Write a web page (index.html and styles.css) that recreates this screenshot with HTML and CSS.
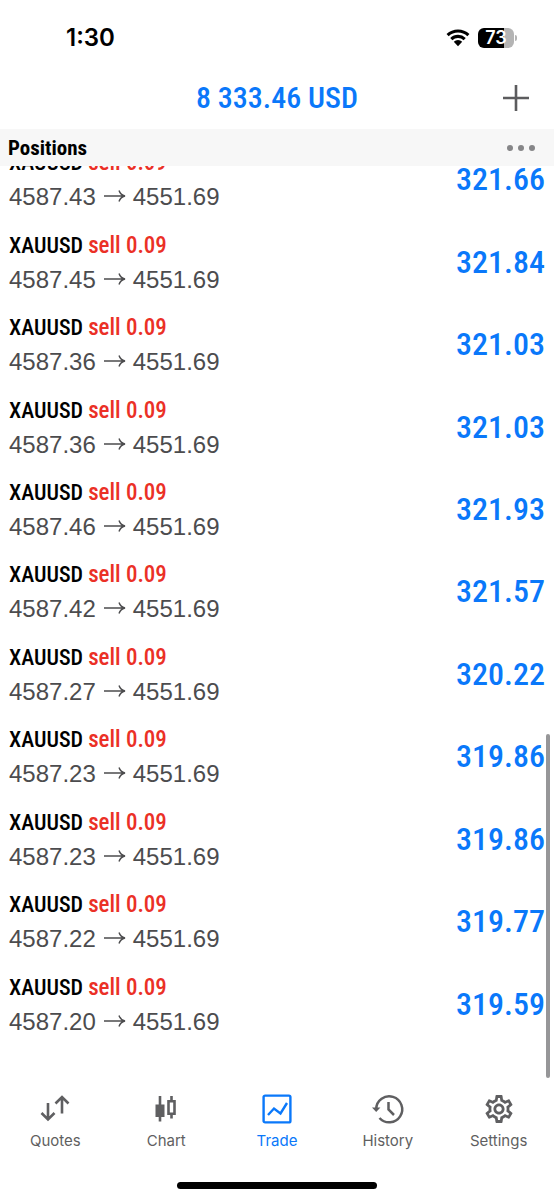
FILE: index.html
```html
<!DOCTYPE html>
<html lang="en">
<head>
<meta charset="utf-8">
<meta name="viewport" content="width=device-width, initial-scale=1">
<title>Trade</title>
<link rel="stylesheet" href="styles.css">
</head>
<body>
<svg width="0" height="0" class="symbols" aria-hidden="true">
  <symbol id="arrow" viewBox="0 0 22 14"><path d="M0 7h21M15 1.500c1 3 3 4.800 6 5.500-3 .7-5 2.500-6 5.500" fill="none" stroke="currentColor" stroke-width="1.400"/></symbol>
</svg>
<div class="app">
  <div class="status">
    <time class="clock">1:30</time>
    <div class="status-icons">
      <svg class="wifi" viewBox="0 0 24 18" aria-hidden="true">
        <path d="M1.600 6.200A15 15 0 0 1 22.400 6.200M5.300 10.100A9.700 9.700 0 0 1 18.700 10.100" fill="none" stroke="#000" stroke-width="3.100"/>
        <path d="M7.800 12.800a6 6 0 0 1 8.400 0L12 17.200z"/>
      </svg>
      <div class="battery"><span class="battery-level">73</span></div>
    </div>
  </div>

  <header class="topbar">
    <h1 class="balance">8 333.46 USD</h1>
    <button class="icon-button add" type="button" aria-label="New order">
      <svg viewBox="0 0 26 26" width="26" height="26"><path d="M13 0v26M0 13h26" stroke="#5c5c5e" stroke-width="2.600"/></svg>
    </button>
  </header>

  <div class="section-head">
    <h2 class="section-title">Positions</h2>
    <button class="icon-button" type="button" aria-label="More">
      <svg viewBox="0 0 30 8" width="30" height="8" fill="#868688"><circle cx="4" cy="4" r="3"/><circle cx="15" cy="4" r="3"/><circle cx="26" cy="4" r="3"/></svg>
    </button>
  </div>

  <main class="scroller">
    <ul class="positions">
      <li class="position"><div><p class="deal">XAUUSD <span class="side">sell 0.09</span></p><p class="prices">4587.43<svg class="arrow"><use href="#arrow"/></svg>4551.69</p></div><span class="profit">321.66</span></li>
      <li class="position"><div><p class="deal">XAUUSD <span class="side">sell 0.09</span></p><p class="prices">4587.45<svg class="arrow"><use href="#arrow"/></svg>4551.69</p></div><span class="profit">321.84</span></li>
      <li class="position"><div><p class="deal">XAUUSD <span class="side">sell 0.09</span></p><p class="prices">4587.36<svg class="arrow"><use href="#arrow"/></svg>4551.69</p></div><span class="profit">321.03</span></li>
      <li class="position"><div><p class="deal">XAUUSD <span class="side">sell 0.09</span></p><p class="prices">4587.36<svg class="arrow"><use href="#arrow"/></svg>4551.69</p></div><span class="profit">321.03</span></li>
      <li class="position"><div><p class="deal">XAUUSD <span class="side">sell 0.09</span></p><p class="prices">4587.46<svg class="arrow"><use href="#arrow"/></svg>4551.69</p></div><span class="profit">321.93</span></li>
      <li class="position"><div><p class="deal">XAUUSD <span class="side">sell 0.09</span></p><p class="prices">4587.42<svg class="arrow"><use href="#arrow"/></svg>4551.69</p></div><span class="profit">321.57</span></li>
      <li class="position"><div><p class="deal">XAUUSD <span class="side">sell 0.09</span></p><p class="prices">4587.27<svg class="arrow"><use href="#arrow"/></svg>4551.69</p></div><span class="profit">320.22</span></li>
      <li class="position"><div><p class="deal">XAUUSD <span class="side">sell 0.09</span></p><p class="prices">4587.23<svg class="arrow"><use href="#arrow"/></svg>4551.69</p></div><span class="profit">319.86</span></li>
      <li class="position"><div><p class="deal">XAUUSD <span class="side">sell 0.09</span></p><p class="prices">4587.23<svg class="arrow"><use href="#arrow"/></svg>4551.69</p></div><span class="profit">319.86</span></li>
      <li class="position"><div><p class="deal">XAUUSD <span class="side">sell 0.09</span></p><p class="prices">4587.22<svg class="arrow"><use href="#arrow"/></svg>4551.69</p></div><span class="profit">319.77</span></li>
      <li class="position"><div><p class="deal">XAUUSD <span class="side">sell 0.09</span></p><p class="prices">4587.20<svg class="arrow"><use href="#arrow"/></svg>4551.69</p></div><span class="profit">319.59</span></li>
    </ul>
    <div class="scrollbar"></div>
  </main>

  <nav class="tabs">
    <a class="tab" href="#quotes">
      <svg class="tab-icon" viewBox="0 0 30 30"><path d="M8 9v16.500M1.500 19L8 25.500l6.500-6.500M22 19.500V3M15.500 9.500L22 3l6.500 6.500" fill="none" stroke="currentColor" stroke-width="2.600"/></svg>
      Quotes
    </a>
    <a class="tab" href="#chart">
      <svg class="tab-icon" viewBox="0 0 30 30"><path d="M4.500 10.500h9v12.500h-9zM7.700 2h2.600v25.500H7.700z" fill="currentColor"/><path d="M17.500 7.200h6v12.600h-6zM20.500 2v5M20.500 20v4.500" fill="none" stroke="currentColor" stroke-width="2.600"/></svg>
      Chart
    </a>
    <a class="tab active" href="#trade" aria-current="page">
      <svg class="tab-icon" viewBox="0 0 30 30" fill="none" stroke="currentColor" stroke-width="2.400"><rect x="1.600" y="1.600" width="26.800" height="26.800" rx="1.500"/><path d="M6 21l6-6.500 6.500 5L25 9"/></svg>
      Trade
    </a>
    <a class="tab" href="#history">
      <svg class="tab-icon" viewBox="0 0 30 30"><path d="M3.200 15A13 13 0 1 1 6.500 24M15.500 8v7.500l5.500 5.500" fill="none" stroke="currentColor" stroke-width="2.500"/><path d="M-1 13.500h8.400l-4.200 4.500z" fill="currentColor"/></svg>
      History
    </a>
    <a class="tab" href="#settings">
      <svg class="tab-icon" viewBox="1.200 1.200 21.600 21.600" fill="currentColor"><path d="M19.430 12.980c.04-.32.07-.64.07-.98 0-.34-.03-.66-.07-.98l2.110-1.650c.19-.15.24-.42.12-.64l-2-3.460c-.09-.16-.26-.25-.44-.25-.06 0-.12.01-.17.03l-2.490 1c-.52-.4-1.080-.73-1.690-.98l-.38-2.650C14.460 2.180 14.250 2 14 2h-4c-.25 0-.46.18-.49.42l-.38 2.650c-.61.25-1.170.59-1.690.98l-2.490-1c-.06-.02-.12-.03-.18-.03-.17 0-.34.09-.43.25l-2 3.460c-.13.22-.07.49.12.64l2.110 1.650c-.04.32-.07.65-.07.98 0 .33.03.66.07.98l-2.110 1.650c-.19.15-.24.42-.12.64l2 3.460c.09.16.26.25.44.25.06 0 .12-.01.17-.03l2.490-1c.52.4 1.080.73 1.690.98l.38 2.650c.03.24.24.42.49.42h4c.25 0 .46-.18.49-.42l.38-2.650c.61-.25 1.170-.59 1.690-.98l2.490 1c.06.02.12.03.18.03.17 0 .34-.09.43-.25l2-3.460c.12-.22.07-.49-.12-.64l-2.110-1.650zm-1.980-1.710c.04.31.05.52.05.73 0 .21-.02.43-.05.73l-.14 1.130.89.7 1.080.84-.7 1.210-1.270-.51-1.040-.42-.9.68c-.43.32-.84.56-1.250.73l-1.060.43-.16 1.130-.2 1.350h-1.400l-.19-1.350-.16-1.130-1.060-.43c-.43-.18-.83-.41-1.230-.71l-.91-.7-1.060.43-1.270.51-.7-1.210 1.080-.84.89-.7-.14-1.130c-.03-.31-.05-.54-.05-.74s.02-.43.05-.73l.14-1.130-.89-.7-1.080-.84.7-1.210 1.270.51 1.040.42.9-.68c.43-.32.84-.56 1.250-.73l1.060-.43.16-1.130.2-1.350h1.390l.19 1.350.16 1.130 1.060.43c.43.18.83.41 1.230.71l.91.7 1.060-.43 1.270-.51.7 1.210-1.070.85-.89.7.14 1.130zM12 8c-2.210 0-4 1.790-4 4s1.790 4 4 4 4-1.790 4-4-1.790-4-4-4zm0 6c-1.100 0-2-.9-2-2s.9-2 2-2 2 .9 2 2-.9 2-2 2z"/></svg>
      Settings
    </a>
  </nav>
  <div class="home-indicator"></div>
</div>
</body>
</html>
```
FILE: styles.css
```css
* {
  box-sizing: border-box;
  margin: 0;
}

body {
  background: #fff;
  color: #000;
  font-family: "Liberation Sans", sans-serif;
}

.symbols {
  position: absolute;
}

.app {
  display: flex;
  flex-direction: column;
  min-height: 100vh;
}

.status {
  display: flex;
  justify-content: space-between;
  align-items: center;
  height: 75px;
  padding: 0 40px 0 66px;
}

.clock {
  font: 600 24px/28px Inter, sans-serif;
}

.status-icons {
  display: flex;
  align-items: center;
  gap: 8px;
}

.wifi {
  width: 24px;
  height: 18px;
}

.battery {
  position: relative;
  width: 36px;
  height: 20px;
  border-radius: 6px;
  background: linear-gradient(90deg, #000 73%, #b4b4b4 73%);
  text-align: center;
}

.battery::after {
  content: "";
  position: absolute;
  right: -3px;
  top: 7px;
  width: 2px;
  height: 6px;
  border-radius: 0 2px 2px 0;
  background: #b4b4b4;
}

.battery-level {
  display: block;
  color: #fff;
  font: 600 18px/20px Inter, sans-serif;
}

.topbar {
  display: grid;
  grid-template-columns: 1fr auto 1fr;
  align-items: center;
  height: 54px;
  padding: 0 25px 8px;
}

.balance,
.section-title,
.deal,
.profit {
  font-family: "Roboto Condensed", "Liberation Sans Narrow", sans-serif;
}

.balance {
  grid-column: 2;
  color: #0a78fa;
  font-size: 30px;
  font-weight: 500;
  line-height: 36px;
}

.icon-button {
  display: flex;
  padding: 0;
  border: 0;
  background: none;
}

.add {
  justify-self: end;
}

.section-head {
  position: relative;
  z-index: 1;
  display: flex;
  justify-content: space-between;
  align-items: center;
  height: 37px;
  padding: 0 18px 0 8px;
  background: #f7f7f7;
}

.section-title {
  font-size: 21px;
  line-height: 26px;
}

.scroller {
  position: relative;
  flex: 1;
  display: flex;
  flex-direction: column;
  overflow: hidden;
}

.positions {
  flex: 1;
  display: grid;
  grid-auto-rows: 1fr;
  margin-top: -27px;
  padding: 0 9px 34px;
  list-style: none;
}

.position {
  display: flex;
  justify-content: space-between;
  align-items: center;
}

.deal {
  font-size: 22px;
  font-weight: 500;
  line-height: 34px;
}

.side {
  color: #eb3026;
  font-size: 23px;
}

.prices {
  color: #4c4c4e;
  font-size: 24px;
  line-height: 34px;
}

.arrow {
  width: 22px;
  height: 14px;
  margin: 0 7px 0 8px;
  vertical-align: 2px;
}

.profit {
  padding-bottom: 2px;
  color: #0a78fa;
  font-size: 32px;
  font-weight: 500;
  line-height: 40px;
}

.scrollbar {
  position: absolute;
  right: 4px;
  bottom: 2px;
  width: 4px;
  height: 344px;
  border-radius: 2px;
  background: #969698;
}

.tabs {
  display: grid;
  grid-template-columns: repeat(5, 1fr);
  height: 102px;
  padding-top: 14px;
}

.tab {
  display: flex;
  flex-direction: column;
  align-items: center;
  gap: 8px;
  color: #5f5f61;
  font: 400 15px/18px Inter, sans-serif;
  text-decoration: none;
}

.tab.active {
  color: #0a78fa;
}

.tab-icon {
  width: 30px;
  height: 30px;
  overflow: visible;
}

.home-indicator {
  align-self: center;
  width: 36%;
  height: 7px;
  margin-bottom: 11px;
  border-radius: 4px;
  background: #000;
}
```
